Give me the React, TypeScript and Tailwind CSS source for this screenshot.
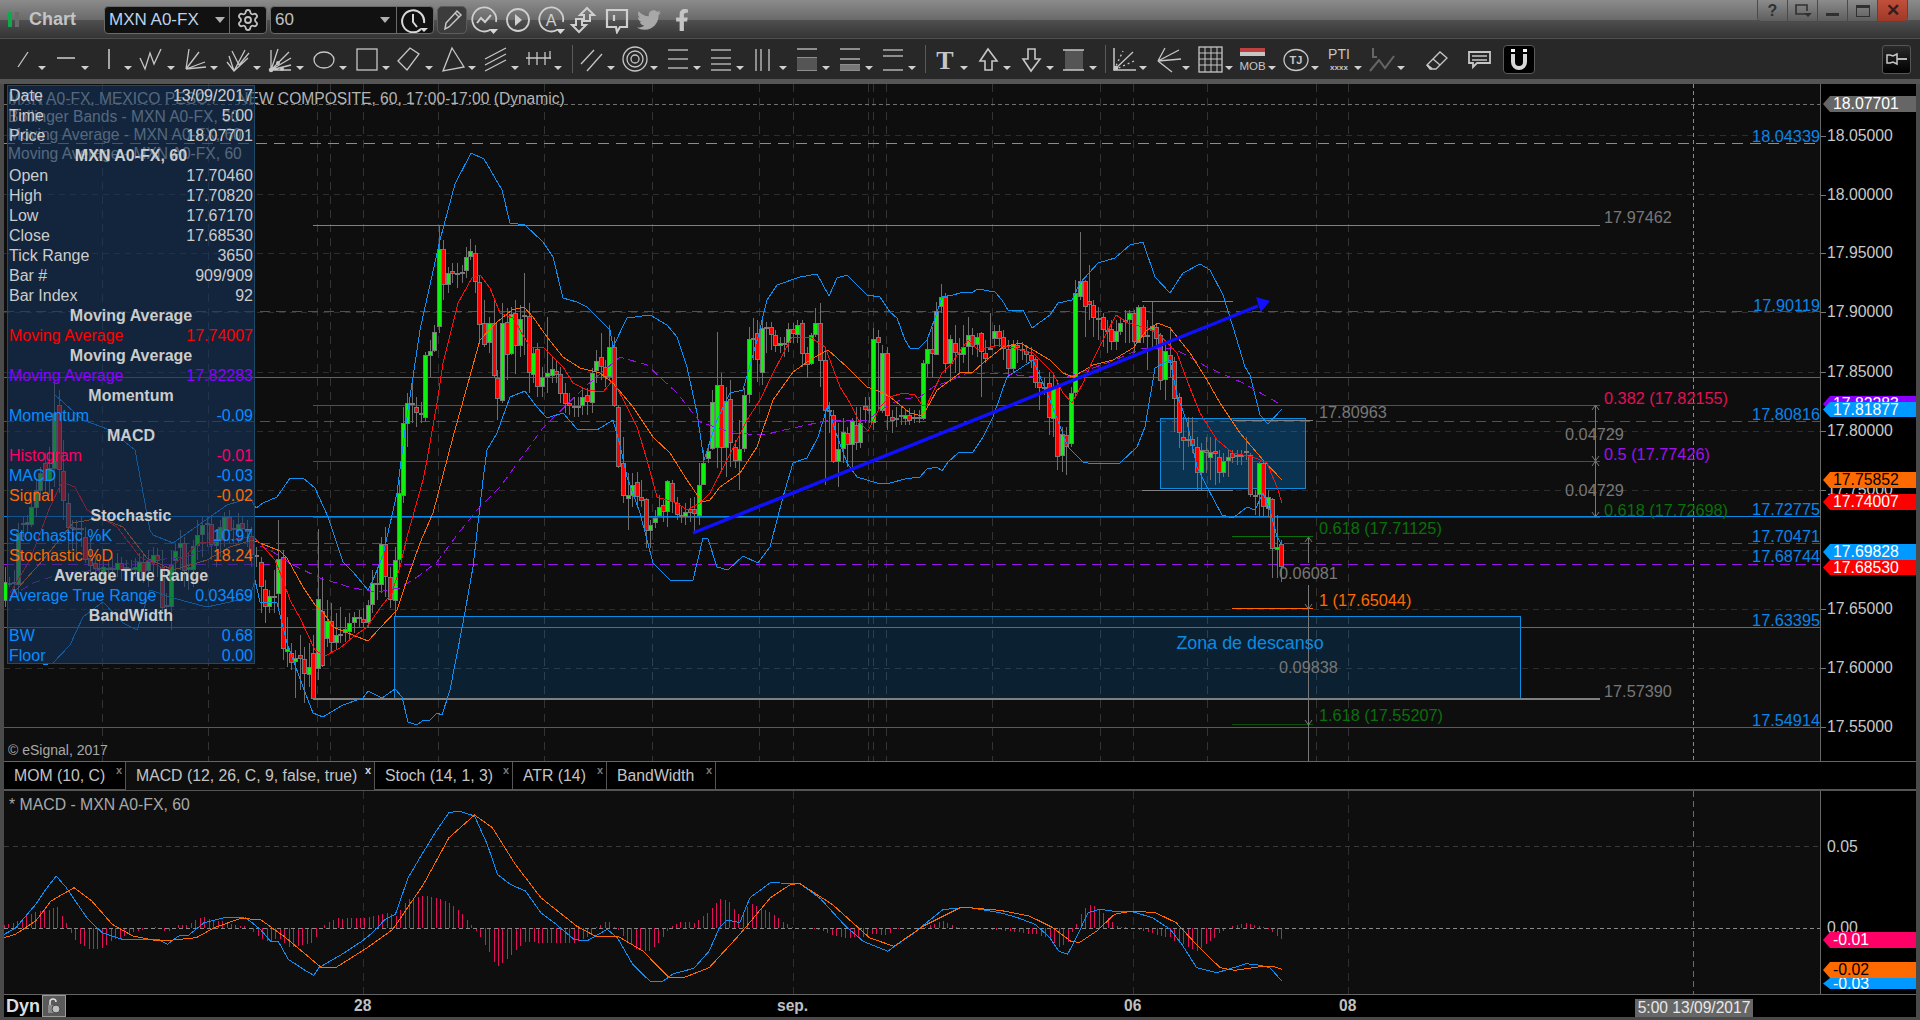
import { ReactNode } from "react";
import { Settings } from "lucide-react";
import { FaFacebookF, FaTwitter } from "react-icons/fa";

type Candle = [number, number, number, number, number, string];

// candles are noted per screen region, then moved to page pixels
const region = (ox: number, oy: number, rows: Candle[]) =>
  rows.map(([x, t, b, h, l, c]) => ({
    x: Math.round(ox + x / 3),
    t: oy + t / 3,
    b: oy + b / 3,
    h: oy + h / 3,
    l: oy + l / 3,
    c,
  }));

const g = "g";
const r = "r";

const candles = [
  ...region(0, 380, [
    [14, 605, 660, 560, 680, g], [28, 608, 610, 590, 620, g], [42, 606, 610, 570, 640, r], [55, 458, 610, 430, 650, g],
    [68, 428, 430, 410, 470, g], [80, 425, 430, 405, 460, g], [93, 380, 430, 360, 440, g], [108, 330, 380, 300, 410, g],
    [120, 280, 330, 260, 345, g], [135, 250, 300, 220, 340, r], [148, 265, 300, 200, 345, g], [162, 100, 265, 0, 320, g],
    [176, 75, 268, 30, 340, r], [188, 272, 358, 180, 420, r], [203, 368, 440, 340, 520, r], [215, 442, 446, 420, 510, r],
    [229, 445, 448, 420, 520, g], [243, 445, 448, 410, 500, g], [256, 470, 535, 440, 550, r], [270, 535, 555, 470, 580, r],
    [284, 550, 565, 520, 590, r], [297, 565, 568, 540, 590, g], [310, 560, 575, 540, 590, g], [323, 565, 568, 540, 600, g],
    [337, 565, 568, 530, 590, g], [350, 548, 565, 520, 590, g], [364, 548, 565, 530, 600, r], [378, 560, 563, 540, 590, g],
    [392, 565, 568, 540, 600, g], [405, 560, 565, 535, 590, g], [418, 545, 572, 520, 600, g], [430, 545, 590, 520, 610, r],
    [445, 540, 570, 510, 620, g], [458, 525, 545, 500, 580, g], [472, 525, 540, 505, 590, r], [485, 560, 680, 510, 700, r],
    [498, 675, 678, 640, 720, g], [512, 555, 677, 510, 750, g], [525, 512, 540, 490, 590, g], [539, 488, 500, 450, 570, g],
    [552, 488, 568, 470, 620, r], [565, 560, 565, 520, 630, g], [578, 498, 568, 480, 620, g], [592, 465, 495, 420, 540, g],
    [605, 435, 462, 410, 530, g], [620, 430, 433, 410, 500, g], [632, 432, 492, 410, 540, r], [647, 478, 495, 450, 560, g],
    [660, 440, 480, 420, 530, g], [672, 412, 448, 395, 500, g], [686, 412, 450, 390, 490, r], [700, 445, 448, 420, 490, r],
    [713, 433, 450, 400, 490, g], [727, 430, 445, 410, 480, r], [740, 450, 453, 420, 500, g], [754, 467, 520, 440, 560, r],
    [767, 525, 528, 500, 560, r],
  ]),
  ...region(260, 480, [
    [2, 245, 318, 230, 400, r], [14, 328, 378, 300, 430, r], [28, 348, 378, 330, 400, g], [42, 347, 349, 270, 400, g],
    [55, 238, 340, 120, 390, g], [68, 232, 505, 210, 540, r], [82, 508, 514, 410, 560, g], [94, 518, 544, 490, 570, r],
    [106, 535, 544, 510, 655, g], [120, 524, 534, 465, 630, r], [133, 538, 580, 500, 670, r], [148, 560, 580, 490, 620, g],
    [160, 520, 655, 465, 655, r], [175, 356, 564, 148, 600, g], [187, 394, 556, 290, 560, r], [202, 424, 474, 360, 500, g],
    [214, 424, 486, 370, 520, r], [229, 464, 484, 400, 510, g], [241, 462, 464, 380, 490, g], [255, 446, 456, 410, 485, g],
    [268, 430, 454, 400, 480, g], [283, 412, 426, 395, 460, g], [296, 412, 414, 390, 440, g], [310, 416, 424, 385, 445, r],
    [323, 376, 426, 360, 445, g], [337, 308, 370, 270, 400, g], [350, 310, 312, 260, 360, g], [364, 193, 312, 170, 340, g],
    [376, 193, 290, 140, 350, r], [390, 292, 358, 260, 385, r], [404, 241, 360, 200, 410, g], [418, 40, 238, 0, 260, g],
  ]),
  ...region(400, 220, [
    [10, 608, 825, 560, 850, g], [22, 548, 608, 520, 680, g], [36, 548, 552, 470, 610, g], [49, 560, 576, 530, 620, r],
    [63, 580, 582, 545, 610, g], [76, 406, 592, 395, 606, g], [91, 392, 403, 360, 470, g], [103, 335, 388, 315, 395, g],
    [118, 88, 318, 18, 340, g], [130, 88, 192, 60, 240, r], [145, 158, 192, 140, 220, g], [157, 152, 158, 130, 190, r],
    [172, 160, 162, 130, 205, g], [185, 155, 157, 135, 190, g], [199, 112, 150, 80, 175, g], [211, 92, 108, 58, 120, g],
    [226, 100, 183, 75, 220, r], [238, 185, 310, 165, 360, r], [253, 308, 372, 240, 380, r], [266, 308, 366, 290, 400, g],
    [281, 310, 465, 240, 475, r], [292, 475, 535, 450, 600, r], [307, 310, 540, 250, 550, g], [320, 305, 400, 265, 480, r],
    [333, 283, 400, 260, 405, g], [346, 280, 375, 240, 462, r], [360, 298, 375, 255, 410, g], [373, 286, 289, 160, 405, g],
    [386, 287, 456, 250, 520, r], [400, 398, 462, 380, 490, g], [412, 388, 500, 370, 530, r], [427, 472, 500, 440, 530, g],
    [440, 458, 466, 290, 520, g], [455, 448, 466, 410, 490, g], [467, 452, 460, 420, 490, r], [481, 463, 520, 440, 550, r],
    [494, 518, 547, 490, 580, r], [508, 550, 556, 520, 585, r], [522, 559, 561, 530, 590, g], [535, 557, 559, 530, 590, g],
    [547, 530, 553, 500, 585, g], [562, 526, 544, 505, 585, r], [575, 458, 545, 445, 580, g], [589, 422, 448, 390, 490, g],
    [602, 412, 440, 340, 480, r], [616, 442, 468, 420, 500, r], [628, 382, 470, 315, 480, g], [643, 382, 555, 350, 560, r],
    [655, 562, 738, 555, 745, r], [670, 730, 826, 650, 850, r], [683, 826, 834, 760, 930, g], [697, 794, 824, 760, 860, g],
    [710, 785, 826, 755, 860, r], [722, 830, 840, 780, 860, r], [737, 838, 930, 835, 985, r], [749, 916, 930, 900, 985, g],
    [764, 894, 906, 870, 925, g], [776, 860, 884, 825, 890, g], [790, 856, 874, 840, 905, r], [802, 784, 874, 780, 920, g],
    [817, 790, 844, 780, 880, r], [830, 848, 882, 830, 900, r], [843, 884, 886, 860, 910, g], [856, 875, 886, 850, 915, g],
    [870, 868, 877, 835, 905, r], [883, 868, 880, 830, 940, r], [897, 794, 884, 730, 915, g], [910, 728, 790, 690, 795, g],
    [925, 694, 716, 680, 730, g], [937, 547, 686, 510, 690, g], [952, 494, 680, 335, 745, g], [964, 496, 682, 460, 750, r],
    [979, 542, 680, 500, 770, g], [991, 538, 666, 480, 740, r], [1005, 680, 720, 660, 745, r], [1018, 688, 720, 600, 810, g],
    [1033, 524, 684, 505, 695, g], [1046, 356, 520, 320, 550, g], [1060, 354, 356, 295, 420, g], [1072, 340, 418, 300, 485, r],
    [1085, 325, 456, 300, 495, g], [1098, 320, 322, 305, 400, g], [1112, 320, 342, 305, 390, r], [1126, 344, 375, 330, 395, r],
    [1139, 368, 375, 350, 400, g], [1152, 368, 370, 350, 410, g], [1165, 328, 366, 310, 395, g], [1178, 328, 340, 310, 370, r],
    [1192, 314, 340, 300, 370, g], [1207, 310, 400, 300, 440, r], [1220, 398, 430, 380, 475, r], [1234, 346, 430, 340, 435, g],
    [1246, 310, 344, 265, 350, g], [1261, 310, 420, 250, 500, r], [1274, 420, 570, 380, 795, r], [1288, 570, 572, 545, 640, g],
    [1300, 586, 724, 570, 730, r], [1315, 688, 724, 610, 800, g], [1328, 635, 684, 595, 730, g], [1341, 640, 672, 620, 740, r],
    [1355, 604, 672, 595, 750, g], [1368, 616, 666, 560, 690, r], [1381, 608, 666, 560, 685, g], [1396, 558, 568, 530, 610, r],
    [1408, 568, 570, 530, 610, g], [1420, 356, 606, 325, 630, g], [1435, 350, 364, 330, 570, r], [1447, 398, 570, 375, 580, g],
    [1462, 400, 585, 380, 630, r], [1475, 590, 598, 570, 640, r], [1489, 594, 596, 560, 620, g],
  ]),
  ...region(890, 260, [
    [32, 466, 468, 440, 495, g], [45, 464, 472, 450, 495, g], [58, 464, 478, 445, 495, r], [72, 470, 472, 450, 490, g],
    [86, 470, 472, 450, 490, g], [100, 308, 472, 300, 480, g], [112, 268, 310, 240, 350, g], [126, 268, 280, 200, 350, r],
    [139, 152, 280, 125, 285, g], [154, 112, 138, 72, 160, g], [166, 112, 310, 100, 340, r], [181, 238, 310, 225, 365, g],
    [194, 250, 278, 195, 340, r], [208, 280, 282, 235, 340, g], [220, 260, 280, 195, 310, g], [235, 224, 256, 170, 340, g],
    [247, 224, 256, 205, 285, r], [262, 230, 250, 220, 290, g], [274, 220, 274, 215, 410, r], [286, 280, 295, 240, 310, r],
    [300, 265, 268, 160, 270, g], [313, 212, 232, 195, 260, g], [327, 212, 232, 195, 260, r],
  ]),
  ...region(1000, 220, [
    [10, 352, 385, 330, 420, r], [24, 388, 445, 360, 465, r], [38, 372, 445, 360, 460, g], [52, 375, 382, 360, 430, r],
    [65, 388, 390, 365, 420, g], [78, 393, 403, 375, 430, r], [92, 405, 420, 380, 445, r], [106, 418, 487, 410, 505, r],
    [118, 487, 502, 450, 570, r], [132, 500, 502, 470, 525, g], [146, 490, 592, 455, 645, r], [160, 500, 592, 460, 650, g],
    [172, 500, 708, 480, 750, r], [187, 642, 704, 620, 755, g], [199, 644, 676, 620, 765, r], [213, 520, 670, 500, 680, g],
    [226, 220, 516, 180, 530, g], [241, 182, 228, 35, 240, g], [254, 182, 256, 180, 350, r], [268, 242, 252, 135, 300, r],
    [280, 256, 292, 240, 350, r], [294, 295, 297, 260, 360, g], [308, 292, 328, 280, 380, r], [320, 330, 332, 300, 400, g],
    [334, 328, 364, 300, 390, r], [347, 334, 364, 300, 390, g], [361, 308, 332, 290, 345, g], [374, 300, 302, 270, 370, g],
    [388, 280, 298, 270, 370, g], [401, 280, 364, 270, 400, r], [415, 260, 364, 255, 370, g], [428, 260, 346, 255, 370, r],
    [441, 344, 346, 300, 450, g], [455, 318, 330, 245, 380, g], [468, 320, 352, 310, 380, r], [481, 346, 480, 340, 510, r],
    [496, 392, 475, 360, 540, g], [509, 404, 424, 320, 470, r], [523, 422, 532, 410, 635, r], [536, 532, 636, 520, 685, r],
    [550, 650, 658, 590, 750, r], [563, 658, 660, 590, 680, g], [577, 658, 676, 590, 700, r], [590, 680, 756, 650, 810, r],
    [604, 690, 756, 670, 810, g], [617, 690, 696, 650, 760, r], [631, 696, 710, 650, 780, g], [644, 694, 700, 650, 795, r],
    [656, 712, 756, 690, 790, r], [670, 722, 756, 700, 770, g], [683, 710, 718, 690, 770, g], [697, 700, 712, 690, 730, r],
    [710, 705, 707, 690, 735, g], [724, 705, 707, 690, 735, g], [737, 692, 696, 650, 720, g], [751, 704, 820, 700, 830, r],
    [764, 825, 827, 810, 885, g], [777, 728, 822, 725, 890, g], [790, 728, 856, 725, 890, r], [805, 830, 862, 810, 890, g],
    [817, 838, 985, 835, 1075, r], [831, 982, 988, 885, 1075, g], [844, 972, 1038, 960, 1085, r],
  ]),
];

const bbUpper =
  "55,395 83,420 110,430 135,450 150,530 153,535 173,543 227,505 250,498 256,508 263,503 277,497 290,478 303,478 315,488 328,517 343,562 353,572 368,590 373,580 383,555 397,493 405,430 420,330 440,240 455,184 471,153 484,159 502,190 510,223 525,225 543,242 553,257 563,298 577,302 587,307 597,317 610,330 613,347 627,318 650,315 667,325 677,337 687,367 697,413 704,460 717,420 730,393 743,390 758,337 767,300 777,285 800,277 817,274 829,296 837,278 847,275 867,295 880,297 890,312 897,318 905,340 910,348 918,349 927,340 935,318 942,297 953,295 960,293 973,292 978,289 995,292 1002,300 1008,310 1023,310 1032,328 1050,315 1058,303 1072,300 1080,283 1098,263 1115,258 1130,245 1143,242 1155,277 1170,293 1183,273 1200,264 1210,270 1223,295 1233,327 1245,367 1250,375 1260,415 1268,424 1282,409";
const bbLower =
  "43,665 53,663 70,645 83,617 103,602 123,623 137,630 150,590 173,598 207,607 230,602 250,597 255,580 260,602 277,603 287,643 303,687 313,713 323,717 343,705 363,698 368,691 382,698 395,689 402,697 408,722 417,725 422,721 430,720 437,713 442,715 450,690 463,623 473,567 483,480 487,450 497,433 510,397 525,391 537,407 547,418 563,413 577,429 597,430 613,420 620,445 627,477 640,513 653,563 670,580 693,580 703,538 708,539 717,567 728,570 743,556 758,563 770,547 783,497 793,463 807,458 818,437 828,405 835,430 847,463 857,477 877,483 890,483 905,479 920,477 927,469 937,467 942,471 948,462 958,453 973,452 983,437 993,417 1000,397 1007,377 1033,360 1050,400 1068,447 1083,462 1093,464 1120,463 1137,447 1145,427 1155,368 1170,360 1177,395 1187,422 1197,467 1207,487 1222,515 1233,518 1247,507 1255,510 1263,493 1270,510 1277,537 1282,545";
const maRed =
  "10,593 30,560 50,507 62,482 75,487 87,510 117,527 140,557 167,570 200,543 227,540 253,537 260,543 275,560 283,580 290,600 300,618 315,650 325,656 340,648 353,637 367,627 380,608 392,593 400,567 407,537 423,480 427,460 437,403 443,363 458,303 472,278 480,275 490,288 500,313 513,318 530,347 543,347 563,367 573,383 587,390 603,392 613,380 627,407 637,427 647,460 657,497 677,503 687,510 700,503 710,493 727,460 747,420 760,400 773,373 792,337 810,337 825,347 840,387 850,403 860,423 868,431 880,407 890,397 903,393 915,395 922,405 927,405 933,392 942,373 952,363 957,355 968,340 978,350 990,347 1000,345 1010,347 1033,353 1053,373 1063,393 1072,403 1083,383 1093,360 1103,340 1116,315 1128,323 1147,328 1158,333 1177,353 1188,383 1200,413 1217,440 1233,453 1253,457 1267,463 1277,487 1282,503";
const maOrange =
  "10,597 43,560 73,523 100,518 123,527 147,558 173,570 207,560 230,547 253,540 260,543 280,551 287,558 303,587 315,605 323,612 333,627 353,635 368,641 380,628 397,610 407,580 420,543 433,513 453,437 480,340 497,322 512,310 524,307 533,317 547,337 563,357 580,368 600,373 613,383 633,407 653,437 670,453 687,480 702,502 710,500 720,487 740,473 757,447 773,400 793,372 813,358 828,350 847,367 867,387 883,393 890,397 900,405 910,413 922,416 930,403 937,390 948,382 960,373 973,372 983,363 993,355 1003,347 1020,343 1033,350 1050,360 1063,373 1073,377 1093,365 1113,360 1133,348 1147,330 1158,323 1170,328 1190,353 1207,380 1220,403 1240,433 1263,460 1282,480";
const maPurple =
  "10,597 33,583 63,573 100,570 133,562 187,557 217,543 253,543 270,550 293,565 320,578 353,588 377,592 400,588 420,575 437,562 457,535 477,510 500,487 543,428 587,385 620,357 647,365 677,393 700,422 733,433 763,435 793,428 830,420 867,420 890,404 903,399 920,397 933,387 947,382 967,373 1000,373 1033,377 1067,377 1110,362 1143,348 1173,348 1207,367 1243,383 1278,403";

// MACD pane traces, [page x, page y]
const fromZoom = (ox: number, sx: number, rows: number[][], oy = 780) =>
  rows.map(([x, y]) => [ox + x / sx, oy + y / 3]);
const fromOverview = (rows: number[][]) => rows.map(([x, y]) => [x * 1.2245, y * 1.2245]);

const macdLine = [
  ...fromZoom(0, 1.96, [[8, 580], [30, 562], [70, 490], [90, 445], [110, 405], [130, 440], [170, 530], [200, 575], [240, 595], [285, 597], [310, 595], [328, 610], [350, 585], [370, 582], [400, 545], [440, 530], [480, 528], [510, 565], [530, 600], [545, 600], [565, 655], [600, 690], [615, 703], [625, 680], [670, 640], [710, 600], [730, 575], [755, 535], [775, 520], [800, 410], [825, 345], [855, 270], [880, 215], [900, 210], [930, 225], [955, 310], [975, 400], [1000, 430], [1030, 450], [1060, 515], [1090, 550], [1125, 595], [1150, 600], [1190, 565], [1210, 590], [1240, 670], [1275, 722], [1300, 720], [1320, 698], [1360, 682], [1390, 630], [1410, 560], [1425, 537], [1450, 545], [1470, 470], [1510, 425], [1568, 428]], 740),
  ...fromOverview([[670, 733], [690, 755], [705, 768], [725, 776], [745, 762], [770, 742], [790, 740]]),
  ...fromZoom(1000, 1.704, [[0, 395], [30, 410], [60, 430], [85, 470], [100, 510], [115, 520], [130, 470], [150, 395], [170, 385], [200, 392], [225, 392], [260, 410], [290, 445], [310, 490], [335, 560], [370, 575], [420, 548], [440, 552], [460, 560], [480, 600]]),
];
const signalLine = [
  ...fromZoom(0, 1.96, [[8, 590], [30, 580], [70, 540], [100, 480], [145, 440], [180, 480], [220, 550], [260, 585], [300, 597], [340, 597], [385, 590], [420, 560], [470, 533], [510, 535], [560, 590], [630, 680], [660, 678], [720, 620], [770, 565], [830, 430], [880, 290], [930, 222], [965, 260], [1010, 370], [1060, 470], [1130, 555], [1170, 588], [1210, 585], [1260, 630], [1310, 708], [1340, 710], [1390, 680], [1450, 580], [1510, 470], [1550, 430], [1568, 428]], 740),
  ...fromOverview([[680, 738], [710, 765], [730, 772], [755, 755], [785, 740]]),
  ...fromZoom(1000, 1.704, [[0, 388], [50, 405], [90, 440], [120, 480], [135, 485], [165, 450], [195, 400], [225, 390], [265, 395], [300, 425], [340, 500], [375, 560], [400, 568], [440, 558], [465, 556], [480, 565]]),
];

const yAt = (line: number[][], x: number) => {
  for (let i = 1; i < line.length; i++) {
    if (x <= line[i][0]) {
      const [x0, y0] = line[i - 1];
      const [x1, y1] = line[i];
      return y0 + ((y1 - y0) * (x - x0)) / (x1 - x0);
    }
  }
  return line[line.length - 1][1];
};

const histogram = Array.from({ length: 288 }, (_, i) => {
  const x = Math.round(4 + i * 4.45);
  return { x, h: yAt(signalLine, x) - yAt(macdLine, x) };
});

const toPoints = (line: number[][]) => line.map((p) => p.join(",")).join(" ");

const gridX = [102, 208, 317, 330, 363, 438, 544, 652, 759, 793, 868, 873, 886, 992, 1100, 1133, 1207, 1316, 1348];
const gridY = [135, 194, 253, 312, 372, 431, 490, 550, 609, 668, 727];

const chartLabels: [number, number, string, string][] = [
  [1604, 217, "17.97462", "#777"],
  [1604, 398, "0.382 (17.82155)", "#e0105a"],
  [1604, 454, "0.5 (17.77426)", "#a010f0"],
  [1604, 510, "0.618 (17.72698)", "#0a700a"],
  [1565, 434, "0.04729", "#777"],
  [1565, 490, "0.04729", "#777"],
  [1604, 691, "17.57390", "#777"],
  [1319, 412, "17.80963", "#777"],
  [1319, 528, "0.618 (17.71125)", "#0a700a"],
  [1279, 573, "0.06081", "#777"],
  [1319, 600, "1 (17.65044)", "#ff6a00"],
  [1319, 715, "1.618 (17.55207)", "#0a700a"],
  [1279, 667, "0.09838", "#777"],
];

const blueLabels: [number, string][] = [
  [136, "18.04339"],
  [305, "17.90119"],
  [414, "17.80816"],
  [509, "17.72775"],
  [536, "17.70471"],
  [556, "17.68744"],
  [620, "17.63395"],
  [720, "17.54914"],
];

const legend: [number, string][] = [
  [116, "Bollinger Bands - MXN A0-FX, 60"],
  [134, "Moving Average - MXN A0-FX, 60"],
  [153, "Moving Average - MXN A0-FX, 60"],
];

const panelRows: { label: string; value?: string; color?: string; head?: boolean }[] = [
  { label: "Date", value: "13/09/2017" },
  { label: "Time", value: "5:00" },
  { label: "Price", value: "18.07701" },
  { label: "MXN A0-FX, 60", head: true },
  { label: "Open", value: "17.70460" },
  { label: "High", value: "17.70820" },
  { label: "Low", value: "17.67170" },
  { label: "Close", value: "17.68530" },
  { label: "Tick Range", value: "3650" },
  { label: "Bar #", value: "909/909" },
  { label: "Bar Index", value: "92" },
  { label: "Moving Average", head: true },
  { label: "Moving Average", value: "17.74007", color: "text-[#ff0000]" },
  { label: "Moving Average", head: true },
  { label: "Moving Average", value: "17.82283", color: "text-[#8a00ff]" },
  { label: "Momentum", head: true },
  { label: "Momentum", value: "-0.09", color: "text-[#0a8cff]" },
  { label: "MACD", head: true },
  { label: "Histogram", value: "-0.01", color: "text-[#ff0066]" },
  { label: "MACD", value: "-0.03", color: "text-[#0a8cff]" },
  { label: "Signal", value: "-0.02", color: "text-[#ff6a00]" },
  { label: "Stochastic", head: true },
  { label: "Stochastic %K", value: "10.97", color: "text-[#0a8cff]" },
  { label: "Stochastic %D", value: "18.24", color: "text-[#ff6a00]" },
  { label: "Average True Range", head: true },
  { label: "Average True Range", value: "0.03469", color: "text-[#0a8cff]" },
  { label: "BandWidth", head: true },
  { label: "BW", value: "0.68", color: "text-[#0a8cff]" },
  { label: "Floor", value: "0.00", color: "text-[#0a8cff]" },
];

const axisPrices: [number, string][] = [
  [136, "18.05000"], [195, "18.00000"], [253, "17.95000"], [312, "17.90000"], [372, "17.85000"],
  [431, "17.80000"], [490, "17.75000"], [609, "17.65000"], [668, "17.60000"], [727, "17.55000"],
];

const tabs = [
  { name: "MOM (10, C)", w: "w-[122px]" },
  { name: "MACD (12, 26, C, 9, false, true)", w: "w-[249px]", active: true },
  { name: "Stoch (14, 1, 3)", w: "w-[138px]" },
  { name: "ATR (14)", w: "w-[94px]" },
  { name: "BandWidth", w: "w-[109px]" },
];

function Tool({ children, noArrow }: { children: ReactNode; noArrow?: boolean }) {
  return (
    <div className="flex h-[40px] w-[43px] shrink-0 items-center">
      <svg width="30" height="30" viewBox="0 0 30 30" fill="none" stroke="#c6c6c6" strokeWidth="1.3">
        {children}
      </svg>
      {!noArrow && (
        <span className="mt-[17px] h-0 w-0 border-x-[4px] border-t-[4px] border-x-transparent border-t-[#d0d0d0]" />
      )}
    </div>
  );
}

function Sep({ w }: { w: string }) {
  return (
    <div className={`flex h-[40px] shrink-0 items-center justify-center ${w}`}>
      <div className="h-[28px] w-px bg-[#5a5a5a]" />
    </div>
  );
}

function Lines({ ys }: { ys: number[] }) {
  return (
    <>
      {ys.map((y) => (
        <line key={y} x1="5" x2="25" y1={y} y2={y} />
      ))}
    </>
  );
}

function Pill({ y, h, label, bg, text }: { y: number; h: string; label: string; bg: string; text: string }) {
  return (
    <div
      className={`absolute left-[2px] right-0 flex items-center pl-[10px] text-[15.8px] leading-none [clip-path:polygon(7px_0,100%_0,100%_100%,7px_100%,0_50%)] ${h} ${bg} ${text}`}
      style={{ top: y }}
    >
      {label}
    </div>
  );
}

function TitleIcon({ w, children }: { w: string; children: ReactNode }) {
  return <div className={`flex h-[30px] shrink-0 items-center justify-center ${w}`}>{children}</div>;
}

function WinButton({ children, className }: { children: ReactNode; className?: string }) {
  return (
    <div
      className={`flex h-[21px] w-[30px] items-center justify-center border-r border-[#4a4a4a] bg-[linear-gradient(#8c8c8c,#5e5e5e)] ${className ?? ""}`}
    >
      {children}
    </div>
  );
}

function TitleBar() {
  return (
    <div className="flex h-[38px] shrink-0 items-start bg-[linear-gradient(#8b8b8b,#6a6a6a_52%,#505050_52%,#343434)] pl-[8px]">
      <div className="mt-[12px] flex h-[15px] gap-[3px]">
        <div className="w-[4px] bg-[#10a84a]" />
        <div className="w-[4px] bg-[#6a6a6a]" />
      </div>
      <div className="ml-[10px] mt-[9px] w-[75px] text-[18px] font-bold leading-[21px] text-[#c4c4c4]">Chart</div>

      <div className="mt-[6px] flex h-[28px] w-[163px] items-center rounded-[4px] border border-[#6a6a6a] bg-[#111111]">
        <div className="flex w-[125px] items-center border-r border-[#6a6a6a] pl-[4px] leading-[26px]">
          <span className="w-[106px] text-[17px] text-[#b9d3ef]">MXN A0-FX</span>
          <span className="h-0 w-0 border-x-[5px] border-t-[6px] border-x-transparent border-t-[#b0b0b0]" />
        </div>
        <div className="flex flex-1 items-center justify-center">
          <Settings size={24} color="#c0c0c0" strokeWidth={1.8} />
        </div>
      </div>

      <div className="ml-[3px] mt-[6px] flex h-[28px] w-[164px] items-center rounded-[4px] border border-[#6a6a6a] bg-[#111111]">
        <div className="flex w-[126px] items-center border-r border-[#6a6a6a] pl-[4px] leading-[26px]">
          <span className="w-[105px] text-[17px] text-[#c0c0c0]">60</span>
          <span className="h-0 w-0 border-x-[5px] border-t-[6px] border-x-transparent border-t-[#b0b0b0]" />
        </div>
        <svg width="34" height="26" viewBox="0 0 34 26" fill="none" stroke="#d8d8d8" strokeWidth="2">
          <path d="M24 22a11 11 0 1 1 3-6" />
          <path d="M16 7v8l4 5" />
          <path d="M23 21h8l-4 4z" fill="#d8d8d8" stroke="none" />
        </svg>
      </div>

      <div className="ml-[3px] mt-[6px] flex h-[28px] w-[30px] items-center justify-center rounded-[5px] border border-[#5c5c5c] bg-[#3c3c3c]">
        <svg width="24" height="24" viewBox="0 0 24 24" fill="none" stroke="#c8c8c8" strokeWidth="1.5">
          <path d="M5 21l1-6L17 3l4 4L9 19z" />
          <path d="M15 5l4 4" />
        </svg>
      </div>

      <div className="mt-[5px] flex">
        <TitleIcon w="w-[34px]">
          <svg width="30" height="30" viewBox="0 0 30 30" fill="none" stroke="#cfcfcf" strokeWidth="1.8">
            <path d="M21 25a12 12 0 1 1 6-8" />
            <path d="M8 18l4-5 4 4 6-7" strokeWidth="2" />
            <path d="M20 24h9l-4.500 5z" fill="#d8d8d8" stroke="none" />
          </svg>
        </TitleIcon>
        <TitleIcon w="w-[34px]">
          <svg width="28" height="28" viewBox="0 0 28 28" fill="none" stroke="#cfcfcf" strokeWidth="1.8">
            <circle cx="14" cy="14" r="11" />
            <path d="M11 8l7 6-7 6z" fill="#cfcfcf" stroke="none" />
          </svg>
        </TitleIcon>
        <TitleIcon w="w-[31px]">
          <svg width="30" height="30" viewBox="0 0 30 30" fill="none" stroke="#cfcfcf" strokeWidth="1.8">
            <path d="M21 25a12 12 0 1 1 6-8" />
            <text x="15" y="21" textAnchor="middle" fontSize="16" fill="#cfcfcf" stroke="none">
              A
            </text>
            <path d="M20 24h9l-4.500 5z" fill="#d8d8d8" stroke="none" />
          </svg>
        </TitleIcon>
        <TitleIcon w="w-[34px]">
          <svg width="28" height="28" viewBox="0 0 28 28" fill="none" stroke="#cfcfcf" strokeWidth="2">
            <path d="M18 2l7 7h-4v6h-6V9h-4z" />
            <path d="M10 26l-7-7h4v-6h6v6h4z" />
          </svg>
        </TitleIcon>
        <TitleIcon w="w-[34px]">
          <svg width="28" height="28" viewBox="0 0 28 28" fill="none" stroke="#cfcfcf" strokeWidth="2.2">
            <path d="M4 4h20v17h-7l-3 5-1-5H4z" />
            <path d="M11 9v6" />
          </svg>
        </TitleIcon>
        <TitleIcon w="w-[29px]">
          <FaTwitter size={24} color="#a8a8a8" />
        </TitleIcon>
        <TitleIcon w="w-[38px]">
          <FaFacebookF size={22} color="#c4c4c4" />
        </TitleIcon>
      </div>

      <div className="ml-auto mr-[12px] flex overflow-hidden rounded-b-[5px] border-b border-l border-[#4a4a4a]">
        <WinButton>
          <span className="text-[16px] font-bold leading-none text-[#303030]">?</span>
        </WinButton>
        <WinButton>
          <svg width="20" height="16" viewBox="0 0 20 16" fill="none" stroke="#303030" strokeWidth="1.6">
            <path d="M13 11H3V2h11v6" />
            <path d="M11 10h8l-4 4z" fill="#303030" stroke="none" />
          </svg>
        </WinButton>
        <WinButton>
          <div className="mt-[8px] h-[3px] w-[13px] bg-[#303030]" />
        </WinButton>
        <WinButton>
          <div className="h-[12px] w-[14px] border border-t-[3px] border-[#303030]" />
        </WinButton>
        <WinButton className="bg-[linear-gradient(#c0503c,#a03828)]">
          <span className="text-[17px] font-bold leading-none text-[#302020]">✕</span>
        </WinButton>
      </div>
    </div>
  );
}

function Toolbar() {
  return (
    <div className="flex h-[41px] shrink-0 items-center border-t border-[#4e4e4e] bg-[#282828] pl-[8px]">
      <Tool><path d="M10 23L20 8" /></Tool>
      <Tool><path d="M6 14h18" strokeWidth="1.6" /></Tool>
      <Tool><path d="M15 5v20" strokeWidth="1.6" /></Tool>
      <Tool><path d="M3 14l5 11 5-16 4 11 7-15" /></Tool>
      <Tool><path d="M6 25L9 5M6 25L19 8M6 25L25 18M6 25L26 23" /></Tool>
      <Tool><path d="M4 18l7 9 14-13M11 27L22 6M11 27L6 12M16 21L9 7M16 21L26 9" /></Tool>
      <Tool>
        <path d="M5 6v20h20M5 26L23 8M5 26L25 14M5 26L12 5M5 26L25 21" />
        <circle cx="5" cy="26" r="1.600" fill="#c6c6c6" />
        <circle cx="12" cy="19" r="1.300" fill="#c6c6c6" />
        <circle cx="16" cy="25" r="1.300" fill="#c6c6c6" />
      </Tool>
      <Tool><ellipse cx="15" cy="16" rx="10" ry="8" /></Tool>
      <Tool><rect x="5" y="5" width="20" height="21" /></Tool>
      <Tool><path d="M3 17L15 4l9 6-12 16z" /></Tool>
      <Tool><path d="M14 4l12 19-21 4z" /></Tool>
      <Tool><path d="M4 15L25 4M4 21L25 10M4 27L25 16" /></Tool>
      <Tool><path d="M2 14h25M5 8v13M13 8v13M21 8v13M26 7v8" /></Tool>
      <Sep w="w-[10px]" />
      <Tool><path d="M4 20L17 6M10 27L25 10" /></Tool>
      <Tool>
        <circle cx="15" cy="15" r="12" />
        <circle cx="15" cy="15" r="8" />
        <circle cx="15" cy="15" r="4" />
      </Tool>
      <Tool><Lines ys={[6, 15, 24]} /></Tool>
      <Tool><Lines ys={[6, 14, 20, 26]} /></Tool>
      <Tool><path d="M7 5v22M12 5v22M20 5v22" /></Tool>
      <Tool>
        <Lines ys={[5, 14, 26]} />
        <rect x="5" y="14" width="20" height="12" fill="#555" stroke="none" />
      </Tool>
      <Tool>
        <Lines ys={[5, 15, 21, 26]} />
        <rect x="5" y="21" width="20" height="5" fill="#777" stroke="none" />
      </Tool>
      <Tool><Lines ys={[6, 12, 26]} /></Tool>
      <Sep w="w-[9px]" />
      <Tool>
        <text x="15" y="25" textAnchor="middle" fontFamily="Liberation Serif" fontSize="26" fontWeight="700" fill="#c6c6c6" stroke="none">
          T
        </text>
      </Tool>
      <Tool><path d="M15 5l9 12h-5v9h-7v-9H7z" strokeWidth="1.6" /></Tool>
      <Tool><path d="M12 5h7v10h5l-9 12L7 15h5z" strokeWidth="1.6" /></Tool>
      <Tool>
        <rect x="6" y="6" width="18" height="20" fill="#555" stroke="none" />
        <path d="M4 6h21M4 26h21" />
      </Tool>
      <Sep w="w-[7px]" />
      <Tool>
        <path d="M5 4v22h22" strokeWidth="1.500" />
        <path d="M5 26L24 8" />
        <path d="M5 26L14 7M5 26L25 17" strokeDasharray="2 3" />
        <path d="M5 22h4v4H5z" fill="#c6c6c6" stroke="none" />
      </Tool>
      <Tool><path d="M27 6L6 17l23-2M6 17l14 11M6 17L13 4" /></Tool>
      <Tool>
        <rect x="4" y="3" width="23" height="25" />
        <path d="M4 9h23M4 15h23M4 21h23M10 3v25M16 3v25M22 3v25" strokeWidth="1" />
      </Tool>
      <Tool>
        <rect x="2" y="4" width="25" height="4" fill="#c04040" stroke="none" />
        <rect x="2" y="8" width="25" height="4" fill="#c6c6c6" stroke="none" />
        <text x="14.500" y="26" textAnchor="middle" fontSize="11.500" fill="#c6c6c6" stroke="none">
          MOB
        </text>
      </Tool>
      <Tool>
        <ellipse cx="15" cy="16" rx="12" ry="10.500" />
        <text x="15" y="20" textAnchor="middle" fontSize="11" fontWeight="700" fill="#c6c6c6" stroke="none">
          TJ
        </text>
      </Tool>
      <Tool>
        <text x="15" y="15" textAnchor="middle" fontSize="14" fill="#c6c6c6" stroke="none">
          PTI
        </text>
        <text x="15" y="26" textAnchor="middle" fontSize="8" fontWeight="700" fill="#c6c6c6" stroke="none">
          xxxx
        </text>
      </Tool>
      <Tool>
        <path d="M6 4v9h4" stroke="#666" strokeWidth="2" />
        <path d="M3 27l9-11 6 8 9-12" stroke="#666" strokeWidth="2" />
      </Tool>
      <div className="w-[11px] shrink-0" />
      <Tool noArrow>
        <path d="M6 21L19 8l7 6-11 11H9z" />
        <path d="M12 15l7 6" />
        <path d="M6 21l5 4" strokeWidth="2.200" />
      </Tool>
      <Tool noArrow>
        <path d="M5 8h21v11H13l-4 4v-4H5z" strokeWidth="1.800" />
        <path d="M8 12h15M8 16h15" />
      </Tool>
      <div className="ml-[-4px] flex h-[29px] w-[32px] items-center justify-center rounded-[4px] border border-[#5a5a5a] bg-black">
        <svg width="26" height="26" viewBox="0 0 26 26">
          <path d="M5 8v8a8 8 0 0 0 16 0V8h-4v8a4 4 0 0 1-8 0V8z" fill="#d8d8d8" />
          <path d="M5 3h4v3H5zM17 3h4v3h-4z" fill="#ffffff" />
        </svg>
      </div>
      <div className="ml-auto mr-[9px] flex h-[29px] w-[29px] items-center justify-center rounded-[3px] border border-[#555] bg-[linear-gradient(#2a2a2a,#000)]">
        <svg width="24" height="20" viewBox="0 0 24 20" fill="none" stroke="#c8c8c8" strokeWidth="1.500">
          <path d="M2 6h3l3 1 4-2v10l-4-2-3 1H2z" />
          <path d="M12 10h10" strokeWidth="1.800" />
        </svg>
      </div>
    </div>
  );
}

function PriceChart() {
  return (
    <div className="relative h-[677px] w-[1816px] shrink-0 overflow-hidden bg-[#0e0e0e]">
      <svg width="1816" height="677" viewBox="4 84 1816 677" className="absolute inset-0">
        {gridY.map((y) => (
          <line key={y} x1="4" x2="1820" y1={y + 0.5} y2={y + 0.5} stroke="#2e2e2e" strokeDasharray="6 5" />
        ))}
        {gridX.map((x) => (
          <line key={x} x1={x + 0.5} x2={x + 0.5} y1="84" y2="761" stroke="#333" strokeDasharray="8 6" />
        ))}
        <line x1="1693.500" x2="1693.500" y1="84" y2="761" stroke="#8a8a8a" strokeDasharray="4 3" />
        <line x1="4" x2="1820" y1="104.500" y2="104.500" stroke="#707070" strokeDasharray="4 3" />

        <rect x="1160.500" y="418.500" width="145" height="70" fill="#0090ff" fillOpacity="0.28" stroke="#0a8ce0" />
        <rect x="394.500" y="616.500" width="1126" height="83" fill="#0090ff" fillOpacity="0.15" stroke="#0a8ce0" />

        <g fill="none" shapeRendering="crispEdges">
          <line x1="4" x2="1820" y1="143.500" y2="143.500" stroke="#1fd81f" strokeDasharray="11 7" />
          <line x1="4" x2="1820" y1="311.500" y2="311.500" stroke="#9a10e8" strokeDasharray="10 6" />
          <line x1="4" x2="1820" y1="377.500" y2="377.500" stroke="#0a7cc8" />
          <line x1="4" x2="1820" y1="421.500" y2="421.500" stroke="#9a10e8" strokeDasharray="10 6" />
          <line x1="4" x2="1820" y1="516.500" y2="516.500" stroke="#0a88e8" />
          <line x1="313" x2="1600" y1="517.500" y2="517.500" stroke="#0a7a14" />
          <line x1="4" x2="1820" y1="543.500" y2="543.500" stroke="#d01a1a" strokeDasharray="10 6" />
          <line x1="4" x2="1820" y1="564.500" y2="564.500" stroke="#9a10e8" strokeDasharray="10 6" />
          <line x1="4" x2="1820" y1="627.500" y2="627.500" stroke="#0a84d8" />
          <line x1="4" x2="1820" y1="727.500" y2="727.500" stroke="#0a70b8" />

          <line x1="313" x2="1600" y1="225.500" y2="225.500" stroke="#808080" />
          <line x1="313" x2="1600" y1="405.500" y2="405.500" stroke="#d01050" />
          <line x1="313" x2="1600" y1="461.500" y2="461.500" stroke="#8c14d0" />
          <line x1="313" x2="1600" y1="699" y2="699" stroke="#808080" strokeWidth="2" />

          <line x1="1142" x2="1233" y1="301.500" y2="301.500" stroke="#808080" />
          <line x1="1142" x2="1233" y1="490.500" y2="490.500" stroke="#808080" />
          <line x1="1233" x2="1313" y1="420.500" y2="420.500" stroke="#808080" />
          <line x1="1232" x2="1313" y1="536.500" y2="536.500" stroke="#0a700a" />
          <line x1="1232" x2="1313" y1="608.500" y2="608.500" stroke="#ff6a00" />
          <line x1="1232" x2="1313" y1="724.500" y2="724.500" stroke="#0a500a" />

          <line x1="1308.500" x2="1308.500" y1="538" y2="563" stroke="#777" />
          <line x1="1308.500" x2="1308.500" y1="585" y2="761" stroke="#777" />
          <line x1="1595.500" x2="1595.500" y1="405" y2="517" stroke="#777" />
        </g>
        <path d="M1305 542l3.500-5 3.500 5M1305 604l3.500 5 3.500-5M1305 720l3.500 5 3.500-5M1592 410l3.500-5 3.500 5M1592 456l3.500 5 3.500-5M1592 466l3.500-5 3.500 5M1592 512l3.500 5 3.500-5" fill="none" stroke="#777" />

        <g shapeRendering="crispEdges">
          {candles.map((c, i) => {
            const doji = c.b - c.t < 1.5;
            return (
              <g key={i}>
                <line x1={c.x + 0.5} x2={c.x + 0.5} y1={c.h} y2={c.l} stroke="#6e6e6e" />
                {doji ? (
                  <rect x={c.x - 2} y={c.t} width="5" height="2" fill="#7a7a7a" />
                ) : (
                  <rect
                    x={c.x - 1.5}
                    y={Math.round(c.t) + 0.5}
                    width="4"
                    height={Math.round(c.b - c.t)}
                    fill={c.c === g ? "#10f010" : "#ff0000"}
                    stroke="#7a7a7a"
                  />
                )}
              </g>
            );
          })}
        </g>

        <g fill="none" shapeRendering="crispEdges">
          <polyline points={bbUpper} stroke="#0f90f5" />
          <polyline points={bbLower} stroke="#0f90f5" />
          <polyline points={maPurple} stroke="#9a10e8" strokeDasharray="8 5" />
          <polyline points={maOrange} stroke="#ff6a00" />
          <polyline points={maRed} stroke="#ff0f0f" />
        </g>

        <line x1="693" y1="533" x2="1258" y2="306" stroke="#1010ff" strokeWidth="3.500" />
        <path d="M1270 301l-14-4 3 10 2 5z" fill="#1010ff" />

        {chartLabels.map(([x, y, text, color]) => (
          <text key={`${x}-${y}`} x={x} y={y + 5.5} fill={color} fontSize="16.300">
            {text}
          </text>
        ))}
        {blueLabels.map(([y, text]) => (
          <text key={y} x="1820" y={y + 5.5} fill="#0a84e8" textAnchor="end" fontSize="16.300">
            {text}
          </text>
        ))}
        <text x="1250" y="649" fill="#0a8ce0" textAnchor="middle" fontSize="17.900">
          Zona de descanso
        </text>
        <text x="8" y="755" fill="#a8a8a8" fontSize="14">
          © eSignal, 2017
        </text>
        <text x="8" y="103.500" fill="#b4b4b4" fontSize="15.600">
          MXN A0-FX, MEXICO PESO /<tspan dx="16"> NEW COMPOSITE, 60, 17:00-17:00 (Dynamic)</tspan>
        </text>
        {legend.map(([y, text]) => (
          <text key={y} x="8" y={y + 5.5} fill="#b4b4b4" fontSize="15.600">
            {text}
          </text>
        ))}
      </svg>

      <div className="absolute left-[3px] top-[1px] flex h-[579px] w-[248px] flex-col border border-[#1d4a66] bg-[#15365c]/60 text-[16px] text-[#cccccc]">
        {panelRows.map((row, i) =>
          row.head ? (
            <div key={i} className="h-[20px] shrink-0 text-center font-bold leading-[20px]">
              {row.label}
            </div>
          ) : (
            <div key={i} className={`flex h-[20px] shrink-0 justify-between pl-[1px] pr-[1px] leading-[20px] ${row.color ?? ""}`}>
              <span>{row.label}</span>
              <span>{row.value}</span>
            </div>
          ),
        )}
      </div>
    </div>
  );
}

function PriceAxis() {
  return (
    <div className="relative h-[677px] w-[96px] shrink-0 border-l border-[#666] bg-black text-[15.8px] text-[#c8c8c8]">
      {axisPrices.map(([y, text]) => (
        <div key={text} className="absolute left-0 flex items-center leading-[16px]" style={{ top: y - 84 - 8 }}>
          <span className="mr-[1px] h-px w-[5px] bg-[#777]" />
          {text}
        </div>
      ))}
      <Pill y={12} h="h-[16px]" label="18.07701" bg="bg-[#666666]" text="text-white" />
      <Pill y={312} h="h-[16px]" label="17.82283" bg="bg-[#8a00ff]" text="text-white" />
      <Pill y={318} h="h-[15px]" label="17.81877" bg="bg-[#0099ff]" text="text-white" />
      <Pill y={388} h="h-[16px]" label="17.75852" bg="bg-[#ff6a00]" text="text-black" />
      <Pill y={410} h="h-[16px]" label="17.74007" bg="bg-[#ff0000]" text="text-white" />
      <Pill y={460} h="h-[16px]" label="17.69828" bg="bg-[#0099ff]" text="text-white" />
      <Pill y={476} h="h-[15px]" label="17.68530" bg="bg-[#ff0000]" text="text-white" />
    </div>
  );
}

function TabsRow() {
  return (
    <div className="flex h-[28px] shrink-0 bg-black text-[15.8px] text-[#c4c4c4]">
      {tabs.map((tab) => (
        <div
          key={tab.name}
          className={`relative flex h-[28px] shrink-0 items-center border-r border-[#555] pl-[10px] ${tab.w} ${
            tab.active ? "bg-[#0e0e0e]" : "border-b"
          }`}
        >
          {tab.name}
          <span
            className={`absolute right-[3px] top-[1px] text-[11px] font-bold leading-[14px] ${
              tab.active ? "text-[#d8d8d8]" : "text-[#7a7a7a]"
            }`}
          >
            x
          </span>
        </div>
      ))}
      <div className="flex-1 border-b border-[#555]" />
    </div>
  );
}

function MacdPane() {
  return (
    <div className="flex h-[203px] shrink-0">
      <div className="relative h-[203px] w-[1816px] shrink-0 overflow-hidden bg-[#0e0e0e]">
        <svg width="1816" height="203" viewBox="4 790 1816 203" className="absolute inset-0">
          {[363, 793, 1133, 1348].map((x) => (
            <line key={x} x1={x + 0.5} x2={x + 0.5} y1="790" y2="993" stroke="#2e2e2e" strokeDasharray="8 6" />
          ))}
          <line x1="1693.500" x2="1693.500" y1="790" y2="993" stroke="#6a6a6a" strokeDasharray="6 4" />
          <line x1="4" x2="1820" y1="845.500" y2="845.500" stroke="#3a3a3a" strokeDasharray="5 4" />
          <g shapeRendering="crispEdges">
            {histogram.map((bar) => (
              <line
                key={bar.x}
                x1={bar.x + 0.5}
                x2={bar.x + 0.5}
                y1="927"
                y2={927 - bar.h}
                stroke="#e0105a"
              />
            ))}
          </g>
          <line x1="4" x2="1820" y1="927.500" y2="927.500" stroke="#8a8a8a" strokeDasharray="4 3" />
          <g fill="none" shapeRendering="crispEdges">
            <polyline points={toPoints(macdLine)} stroke="#0f90f5" />
            <polyline points={toPoints(signalLine)} stroke="#ff6a00" />
          </g>
          <text x="9" y="809" fill="#a8a8a8" fontSize="15.800">
            * MACD - MXN A0-FX, 60
          </text>
        </svg>
      </div>
      <div className="relative h-[203px] w-[96px] shrink-0 border-l border-[#666] bg-black text-[15.8px] text-[#c8c8c8]">
        <div className="absolute left-[6px] top-[48px] leading-[16px]">0.05</div>
        <div className="absolute left-[6px] top-[129px] leading-[16px]">0.00</div>
        <Pill y={141} h="h-[16px]" label="-0.01" bg="bg-[#ff0066]" text="text-white" />
        <Pill y={187} h="h-[11px]" label="-0.03" bg="bg-[#0099ff]" text="text-white" />
        <Pill y={171} h="h-[16px]" label="-0.02" bg="bg-[#ff6a00]" text="text-black" />
      </div>
    </div>
  );
}

function TimeAxis() {
  return (
    <div className="relative flex h-[23px] shrink-0 items-center border-t border-[#666] bg-black text-[15.6px] font-bold text-[#c0c0c0]">
      <span className="pl-[2px] text-[18px] text-[#dddddd]">Dyn</span>
      <div className="ml-[2px] flex h-[22px] w-[24px] items-center justify-center border border-[#999] bg-[#5a5a5a]">
        <svg width="16" height="18" viewBox="0 0 16 18" fill="none" stroke="#e0e0e0" strokeWidth="1.500">
          <path d="M4 9V5a3 3 0 0 1 6 0" />
          <rect x="2" y="8" width="8" height="8" fill="#8a8a8a" stroke="none" />
          <circle cx="10" cy="12" r="4" fill="#c0c0c0" stroke="#444" strokeWidth="1" />
        </svg>
      </div>
      <span className="absolute left-[350px] leading-[22px]">28</span>
      <span className="absolute left-[773px] leading-[22px]">sep.</span>
      <span className="absolute left-[1120px] leading-[22px]">06</span>
      <span className="absolute left-[1335px] leading-[22px]">08</span>
      <span className="absolute left-[1631px] top-[4px] flex h-[18px] w-[118px] items-center justify-center bg-[#666666] text-[15.6px] font-normal text-[#e8e8e8]">
        5:00 13/09/2017
      </span>
    </div>
  );
}

export default function App() {
  return (
    <div className="flex h-[1020px] w-[1920px] flex-col overflow-hidden bg-[#4a4a4a] font-['Liberation_Sans',Arial,sans-serif]">
      <TitleBar />
      <Toolbar />
      <div className="h-[5px] shrink-0 bg-[#555555]" />
      <div className="flex flex-col px-[4px]">
        <div className="flex h-[677px] shrink-0">
          <PriceChart />
          <PriceAxis />
        </div>
        <div className="h-px shrink-0 bg-[#666]" />
        <TabsRow />
        <div className="h-px shrink-0 bg-[#555]" />
        <MacdPane />
        <TimeAxis />
      </div>
    </div>
  );
}
